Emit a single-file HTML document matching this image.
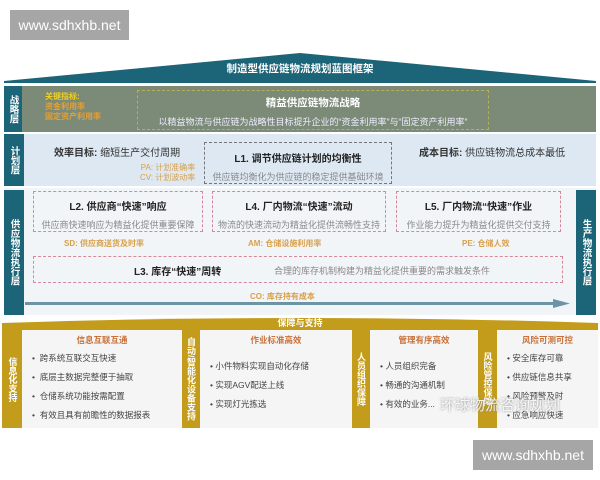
<!DOCTYPE html><html><head><meta charset="utf-8"><style>
*{margin:0;padding:0;box-sizing:border-box}
body{width:600px;height:480px;background:#fff;position:relative;overflow:hidden;font-family:"Liberation Sans","Noto Sans CJK SC",sans-serif}
.a{position:absolute}
.wm{background:#a6a6a6;color:#fff;font-size:14px;text-align:center;line-height:30px}
.tab{background:#1c6478;color:#fff;font-size:9.5px;font-weight:bold;text-align:center;line-height:11px;display:flex;align-items:center;justify-content:center;writing-mode:vertical-rl}
.box{border:1px dashed #d48a9a;text-align:center}
.t{font-size:10px;font-weight:bold;color:#222}
.s{font-size:9px;color:#888;white-space:nowrap}
.k{font-size:8px;color:#d7a04a;font-weight:bold}
.col{background:#f5f5f5;font-size:8.5px;color:#444}
.col h4{font-size:8.5px;color:#c8703a;text-align:center;margin:4px 0 6px}
.col p{margin:0 0 7px 10px;white-space:nowrap}
.vb{color:#fff;font-size:9px;font-weight:bold;writing-mode:vertical-rl;display:flex;align-items:center;justify-content:center;line-height:10px}
</style></head><body>
<div class="a wm" style="left:10px;top:10px;width:119px;height:30px">www.sdhxhb.net</div>
<svg class="a" style="left:0;top:50px" width="600" height="36"><polygon points="300,3 596,31 596,33 4,33 4,31" fill="#1c6478"/></svg>
<div class="a" style="left:0;top:61px;width:600px;text-align:center;color:#fff;font-size:10.5px;font-weight:bold">制造型供应链物流规划蓝图框架</div>
<div class="a" style="left:4px;top:86px;width:592px;height:46px;background:#7c8a78"></div>
<div class="a tab" style="left:4px;top:86px;width:18px;height:46px">战略层</div>
<div class="a" style="left:45px;top:92px;font-size:8px;color:#f0d020;font-weight:bold;line-height:10px">关键指标:<br><span style="color:#e8a030">资金利用率<br>固定资产利用率</span></div>
<div class="a" style="left:137px;top:90px;width:352px;height:40px;border:1px dashed #b8b050;text-align:center;color:#fff">
<div style="font-size:10.5px;font-weight:bold;margin-top:4px">精益供应链物流战略</div>
<div style="font-size:9px;margin-top:5px;color:#eef;white-space:nowrap">以精益物流与供应链为战略性目标提升企业的“资金利用率”与“固定资产利用率”</div></div>
<div class="a" style="left:4px;top:134px;width:592px;height:52px;background:#dde8f3"></div>
<div class="a tab" style="left:4px;top:134px;width:20px;height:52px">计划层</div>
<div class="a" style="left:54px;top:144px;font-size:10px;color:#333"><b>效率目标:</b> 缩短生产交付周期</div>
<div class="a" style="left:140px;top:163px;font-size:8px;color:#d7a04a;line-height:10px;text-align:right">PA: 计划准确率<br>CV: 计划波动率</div>
<div class="a" style="left:204px;top:142px;width:188px;height:42px;border:1px dashed #777;text-align:center">
<div class="t" style="margin-top:7px">L1. 调节供应链计划的均衡性</div><div class="s" style="margin-top:5px">供应链均衡化为供应链的稳定提供基础环境</div></div>
<div class="a" style="left:419px;top:144px;font-size:10px;color:#333"><b>成本目标:</b> 供应链物流总成本最低</div>
<div class="a" style="left:4px;top:188px;width:592px;height:127px;background:#f2f5f8"></div>
<div class="a tab" style="left:4px;top:190px;width:20px;height:125px">供应物流执行层</div>
<div class="a tab" style="left:576px;top:190px;width:20px;height:125px">生产物流执行层</div>
<div class="a box" style="left:33px;top:191px;width:170px;height:41px"><div class="t" style="margin-top:6px">L2. 供应商“快速”响应</div><div class="s" style="margin-top:5px">供应商快速响应为精益化提供重要保障</div></div>
<div class="a box" style="left:212px;top:191px;width:174px;height:41px"><div class="t" style="margin-top:6px">L4. 厂内物流“快速”流动</div><div class="s" style="margin-top:5px">物流的快速流动为精益化提供流畅性支持</div></div>
<div class="a box" style="left:396px;top:191px;width:165px;height:41px"><div class="t" style="margin-top:6px">L5. 厂内物流“快速”作业</div><div class="s" style="margin-top:5px">作业能力提升为精益化提供交付支持</div></div>
<div class="a k" style="left:64px;top:238px">SD: 供应商送货及时率</div>
<div class="a k" style="left:248px;top:238px">AM: 仓储设施利用率</div>
<div class="a k" style="left:462px;top:238px">PE: 仓储人效</div>
<div class="a box" style="left:33px;top:256px;width:530px;height:27px"><span class="t" style="position:absolute;left:100px;top:6px">L3. 库存“快速”周转</span><span class="s" style="position:absolute;left:240px;top:7px">合理的库存机制构建为精益化提供重要的需求触发条件</span></div>
<div class="a k" style="left:250px;top:291px">CO: 库存持有成本</div>
<svg class="a" style="left:25px;top:299px" width="550" height="10"><rect x="0" y="3" width="530" height="3" fill="#6b95a5"/><polygon points="528,0 545,4.5 528,9" fill="#6b95a5"/></svg>
<svg class="a" style="left:0;top:315px" width="600" height="15"><path d="M2,15 L2,8 Q300,-2 598,8 L598,15Z" fill="#c39c1c"/></svg>
<div class="a" style="left:2px;top:325px;width:596px;height:103px;background:#c39c1c"></div>
<div class="a" style="left:0;top:316px;width:600px;text-align:center;color:#fff;font-size:9px;font-weight:bold">保障与支持</div>
<div class="a vb" style="left:3px;top:330px;width:19px;height:98px">信息化支持</div>
<div class="a col" style="left:22px;top:330px;width:160px;height:98px"><h4>信息互联互通</h4><p>•&nbsp;&nbsp;跨系统互联交互快速</p><p>•&nbsp;&nbsp;底层主数据完整便于抽取</p><p>•&nbsp;&nbsp;仓储系统功能按需配置</p><p>•&nbsp;&nbsp;有效且具有前瞻性的数据报表</p></div>
<div class="a vb" style="left:182px;top:330px;width:18px;height:98px">自动/智能化设备支持</div>
<div class="a col" style="left:200px;top:330px;width:152px;height:98px"><h4>作业标准高效</h4><p style="margin-top:14px">• 小件物料实现自动化存储</p><p>• 实现AGV配送上线</p><p>• 实现灯光拣选</p></div>
<div class="a vb" style="left:352px;top:330px;width:18px;height:98px">人员组织保障</div>
<div class="a col" style="left:370px;top:330px;width:108px;height:98px"><h4>管理有序高效</h4><p style="margin-top:14px">• 人员组织完备</p><p>• 畅通的沟通机制</p><p>• 有效的业务...</p></div>
<div class="a vb" style="left:478px;top:330px;width:19px;height:98px">风险管控保障</div>
<div class="a col" style="left:497px;top:330px;width:101px;height:98px"><h4>风险可测可控</h4><p>• 安全库存可靠</p><p>• 供应链信息共享</p><p>• 风险预警及时</p><p>• 应急响应快速</p></div>
<div class="a" style="left:440px;top:394px;font-size:15px;color:rgba(255,255,255,.85);text-shadow:0 0 2px #888">环球物流咨询规划</div>
<div class="a wm" style="left:473px;top:440px;width:120px;height:30px">www.sdhxhb.net</div>
</body></html>
